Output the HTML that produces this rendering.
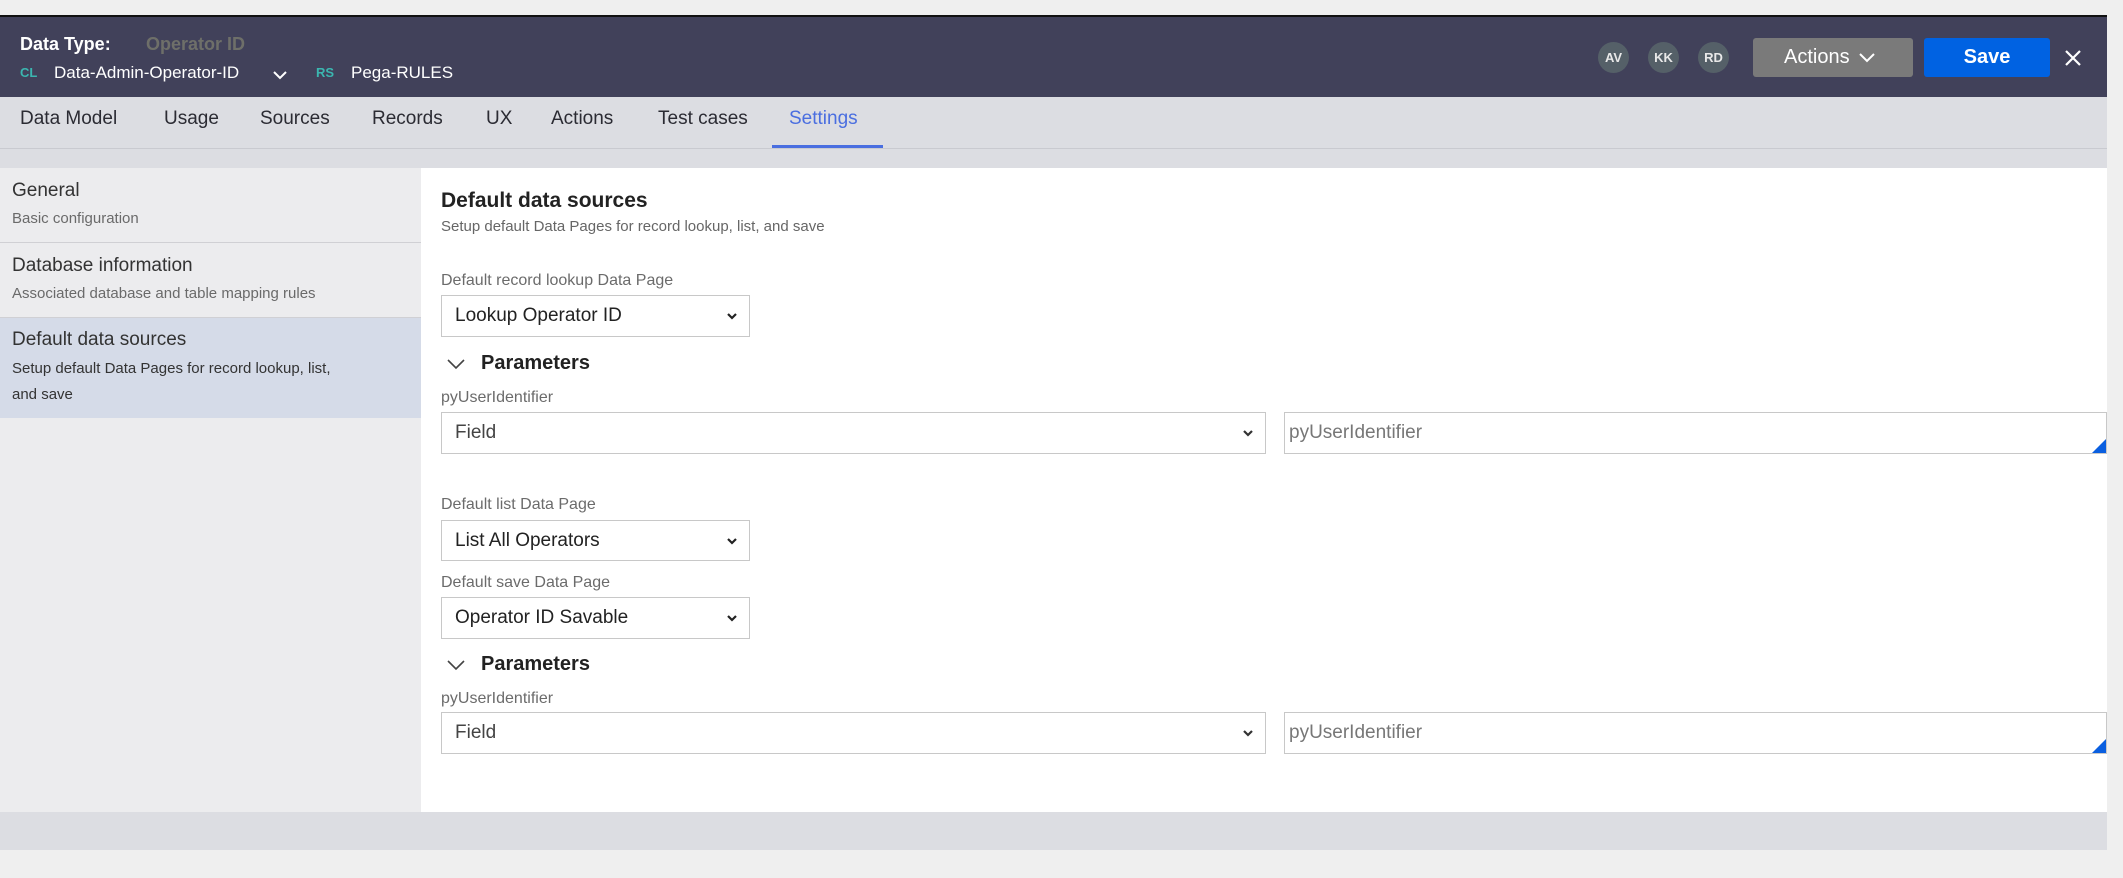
<!DOCTYPE html>
<html><head><meta charset="utf-8"><style>
*{box-sizing:border-box;margin:0;padding:0}
body{width:2123px;height:878px;background:#efefef;font-family:"Liberation Sans",sans-serif;position:relative;overflow:hidden}
.abs{position:absolute}
.hdr{left:0;top:15px;width:2107px;height:82px;background:#41415a;border-top:2px solid #111}
.tabs{left:0;top:97px;width:2107px;height:52px;background:#dcdde2;border-bottom:1px solid #c9cad0}
.strip{left:0;top:149px;width:2107px;height:19px;background:#dcdde2}
.side{left:0;top:168px;width:421px;height:644px;background:#ececee}
.main{left:421px;top:168px;width:1686px;height:644px;background:#fff}
.foot{left:0;top:812px;width:2107px;height:38px;background:#dcdde2}
.t{position:absolute;white-space:nowrap}
.tab{position:absolute;top:108px;font-size:19px;color:#2b2b33}
.av{position:absolute;top:42px;width:31px;height:31px;border-radius:50%;background:#556068;color:#e8e8e8;font-size:13px;font-weight:bold;text-align:center;line-height:31px}
.sel{position:absolute;border:1px solid #c8c8c8;background:#fff;font-size:19px;color:#222;padding-left:13px;display:flex;align-items:center}
.sel .ch{position:absolute;right:10px;top:50%;margin-top:-7px}
.lbl{position:absolute;font-size:16px;color:#6b6b6b}
.par{position:absolute;font-size:20px;font-weight:bold;color:#222}
.tri{position:absolute;right:0;bottom:0;width:0;height:0;border-left:14px solid transparent;border-bottom:14px solid #0a5fe0}
</style></head><body>
<div class="abs hdr"></div>
<div class="t" style="left:20px;top:34px;font-size:18px;font-weight:bold;color:#fff">Data Type:</div>
<div class="t" style="left:146px;top:34px;font-size:18px;font-weight:bold;color:#6e6f69">Operator ID</div>
<div class="t" style="left:20px;top:65px;font-size:13px;font-weight:bold;color:#3bb6b0">CL</div>
<div class="t" style="left:54px;top:63px;font-size:17px;color:#fff">Data-Admin-Operator-ID</div>
<svg class="abs" style="left:272px;top:70px" width="16" height="10"><path d="M2 2 L8 8 L14 2" stroke="#fff" stroke-width="2" fill="none"/></svg>
<div class="t" style="left:316px;top:65px;font-size:13px;font-weight:bold;color:#3bb6b0">RS</div>
<div class="t" style="left:351px;top:63px;font-size:17px;color:#fff">Pega-RULES</div>
<div class="av" style="left:1598px">AV</div>
<div class="av" style="left:1648px">KK</div>
<div class="av" style="left:1698px">RD</div>
<div class="abs" style="left:1753px;top:38px;width:160px;height:39px;background:#7a7a7a;border-radius:3px;color:#fff;font-size:20px;line-height:39px;padding-left:31px">Actions
<svg style="position:absolute;left:105px;top:14px" width="18" height="11"><path d="M2 2 L9 9 L16 2" stroke="#fff" stroke-width="2" fill="none"/></svg></div>
<div class="abs" style="left:1924px;top:38px;width:126px;height:39px;background:#0062e2;border-radius:3px;color:#fff;font-size:20px;font-weight:bold;line-height:39px;text-align:center">Save</div>
<svg class="abs" style="left:2063px;top:48px" width="20" height="20"><path d="M3 3 L17 17 M17 3 L3 17" stroke="#fff" stroke-width="2.2"/></svg>

<div class="abs tabs"></div>
<div class="tab" style="left:20px">Data Model</div>
<div class="tab" style="left:164px">Usage</div>
<div class="tab" style="left:260px">Sources</div>
<div class="tab" style="left:372px">Records</div>
<div class="tab" style="left:486px">UX</div>
<div class="tab" style="left:551px">Actions</div>
<div class="tab" style="left:658px">Test cases</div>
<div class="tab" style="left:789px;color:#4a6ee0">Settings</div>
<div class="abs" style="left:772px;top:145px;width:111px;height:3px;background:#4a6ee0"></div>
<div class="abs strip"></div>

<div class="abs side"></div>
<div class="t" style="left:12px;top:180px;font-size:19px;color:#333">General</div>
<div class="t" style="left:12px;top:210px;font-size:15px;color:#6a6a6a">Basic configuration</div>
<div class="abs" style="left:0;top:242px;width:421px;height:1px;background:#d0d0d4"></div>
<div class="t" style="left:12px;top:255px;font-size:19px;color:#333">Database information</div>
<div class="t" style="left:12px;top:285px;font-size:15px;color:#6a6a6a">Associated database and table mapping rules</div>
<div class="abs" style="left:0;top:317px;width:421px;height:101px;background:#d5dbe8;border-top:1px solid #d0d0d4"></div>
<div class="t" style="left:12px;top:329px;font-size:19px;color:#333">Default data sources</div>
<div class="t" style="left:12px;top:360px;font-size:15px;color:#333">Setup default Data Pages for record lookup, list,</div>
<div class="t" style="left:12px;top:386px;font-size:15px;color:#333">and save</div>

<div class="abs main"></div>
<div class="t" style="left:441px;top:189px;font-size:21px;font-weight:bold;color:#222">Default data sources</div>
<div class="t" style="left:441px;top:218px;font-size:15px;color:#666">Setup default Data Pages for record lookup, list, and save</div>

<div class="lbl" style="left:441px;top:272px">Default record lookup Data Page</div>
<div class="sel" style="left:441px;top:295px;width:309px;height:42px">Lookup Operator ID<svg class="ch" width="14" height="14"><path d="M3 5 L7 9 L11 5" stroke="#222" stroke-width="2.2" fill="none"/></svg></div>
<svg class="abs" style="left:446px;top:358px" width="20" height="12"><path d="M2 2 L10 10 L18 2" stroke="#444" stroke-width="1.6" fill="none"/></svg>
<div class="par" style="left:481px;top:352px">Parameters</div>
<div class="lbl" style="left:441px;top:389px">pyUserIdentifier</div>
<div class="sel" style="left:441px;top:412px;width:825px;height:42px;color:#444">Field<svg class="ch" width="14" height="14"><path d="M3 5 L7 9 L11 5" stroke="#333" stroke-width="2.2" fill="none"/></svg></div>
<div class="sel" style="left:1284px;top:412px;width:823px;height:42px;color:#777;padding-left:4px">pyUserIdentifier<div class="tri"></div></div>

<div class="lbl" style="left:441px;top:496px">Default list Data Page</div>
<div class="sel" style="left:441px;top:520px;width:309px;height:41px">List All Operators<svg class="ch" width="14" height="14"><path d="M3 5 L7 9 L11 5" stroke="#222" stroke-width="2.2" fill="none"/></svg></div>
<div class="lbl" style="left:441px;top:574px">Default save Data Page</div>
<div class="sel" style="left:441px;top:597px;width:309px;height:42px">Operator ID Savable<svg class="ch" width="14" height="14"><path d="M3 5 L7 9 L11 5" stroke="#222" stroke-width="2.2" fill="none"/></svg></div>
<svg class="abs" style="left:446px;top:659px" width="20" height="12"><path d="M2 2 L10 10 L18 2" stroke="#444" stroke-width="1.6" fill="none"/></svg>
<div class="par" style="left:481px;top:653px">Parameters</div>
<div class="lbl" style="left:441px;top:690px">pyUserIdentifier</div>
<div class="sel" style="left:441px;top:712px;width:825px;height:42px;color:#444">Field<svg class="ch" width="14" height="14"><path d="M3 5 L7 9 L11 5" stroke="#333" stroke-width="2.2" fill="none"/></svg></div>
<div class="sel" style="left:1284px;top:712px;width:823px;height:42px;color:#777;padding-left:4px">pyUserIdentifier<div class="tri"></div></div>

<div class="abs foot"></div>
</body></html>
